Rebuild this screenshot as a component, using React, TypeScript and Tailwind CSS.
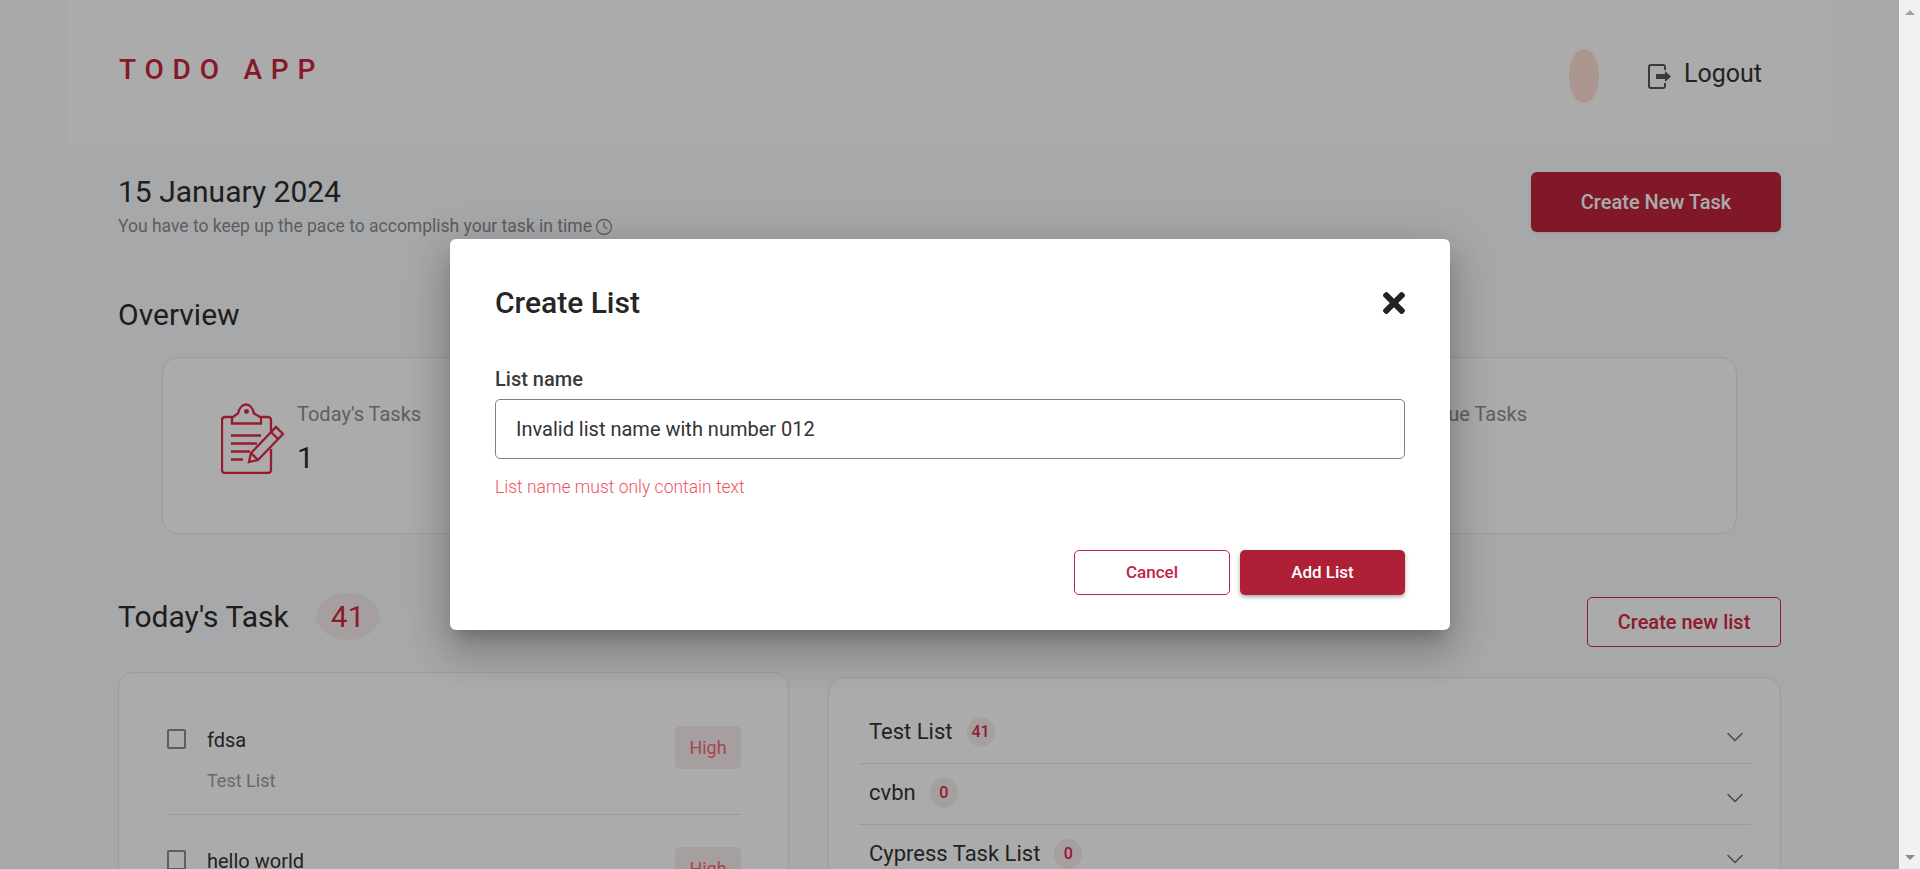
import React from "react";
import { ChevronDown, Clock } from "lucide-react";
import { FaTimes } from "react-icons/fa";

const lists = [
	{ name: "Test List", count: 41 },
	{ name: "cvbn", count: 0 },
	{ name: "Cypress Task List", count: 0 },
];

const tasks = [
	{ title: "fdsa", list: "Test List" },
	{ title: "hello world", list: "Test List" },
];

const TaskIcon: React.FC = () => (
	<svg width="64" height="71" viewBox="0 0 64 71" fill="none" stroke="#df2947" strokeWidth="2.3">
		<path d="M11 14H4a3 3 0 0 0-3 3v50a3 3 0 0 0 3 3h43a3 3 0 0 0 3-3V46" />
		<path d="M40 14h7a3 3 0 0 1 3 3v12" />
		<path d="M11 20.5h29v-6l-7-4c-1-5-4-9-8-9s-7 4-8 9l-6 4z" />
		<circle cx="25.500" cy="8.500" r="1.300" fill="#df2947" />
		<path d="M10 32.500h30M10 40.500h26M10 48.500h19M10 56.500h12" />
		<path d="M28 59l2-9 25-26 7 7-25 26z" fill="#ffffff" />
		<path d="M30 50l7 7M50 29l7 7" />
	</svg>
);

const LogoutIcon: React.FC = () => (
	<svg width="23" height="25" viewBox="0 0 23 25" fill="none">
		<path d="M17 6V3a2 2 0 0 0-2-2H3a2 2 0 0 0-2 2v19a2 2 0 0 0 2 2h12a2 2 0 0 0 2-2v-3" stroke="#575757" strokeWidth="2" />
		<path d="M8 10h9V7l6 5.500-6 5.500v-3H8z" fill="#575757" />
	</svg>
);

const Stat: React.FC<{ label: string; value: number }> = ({ label, value }) => (
	<div className="flex gap-[12px]">
		<TaskIcon />
		<div>
			<div className="text-[20px] leading-[23px] text-[#8e8e92]">{label}</div>
			<div className="text-[30px] leading-[35px] mt-[14px] text-[#2a2a2a]">{value}</div>
		</div>
	</div>
);

const TaskRow: React.FC<{ title: string; list: string }> = ({ title, list }) => (
	<div className="flex justify-between items-start border-b border-[#e7e7e7] pb-[23px] mb-[32px]">
		<div className="flex gap-[21px]">
			<div className="w-[19px] h-[20px] mt-[3px] border-2 border-[#8c8c8c] rounded-[2px]" />
			<div className="mt-[3px]">
				<div className="text-[20px] leading-[23px] text-[#333333]">{title}</div>
				<div className="text-[18px] leading-[21px] mt-[18px] text-[#9e9e9e]">{list}</div>
			</div>
		</div>
		<div className="w-[66px] h-[43px] rounded-[5px] bg-[#f7eeee] text-[#ff6576] text-[18px] flex items-center justify-center">
			High
		</div>
	</div>
);

const ListRow: React.FC<{ name: string; count: number }> = ({ name, count }) => (
	<div className="flex justify-between items-start h-[61px] border-b border-[#e7e7e7] pl-[10px] pr-[2px]">
		<div className="flex items-center gap-[14px] mt-[14px]">
			<span className="text-[22px] leading-[26px] text-[#333333]">{name}</span>
			<span className="w-[28px] h-[30px] rounded-[50%] bg-[#f7eeee] text-[#e0284a] text-[16px] font-medium flex items-center justify-center">
				{count}
			</span>
		</div>
		<ChevronDown size={28} strokeWidth={1.3} className="mt-[20px] text-[#6e6e6e]" />
	</div>
);

const App: React.FC = () => {
	return (
		<div className="h-[869px] flex overflow-hidden [font-family:Roboto,sans-serif]">
			<div className="relative flex-1 overflow-hidden bg-[#fafbfd]">
				<header className="mx-[67px] h-[143px] bg-white flex justify-between pl-[52px] pr-[70px]">
					<div className="mt-[53px] text-[28px] leading-[33px] font-medium tracking-[8.8px] text-[#c8243c]">TODO APP</div>
					<div className="flex items-center h-[152px]">
						<div className="w-[30px] h-[54px] rounded-[50%] bg-[#ffe0d7] mr-[49px]" />
						<LogoutIcon />
						<span className="ml-[13px] text-[25px] leading-[30px] -mt-[4px] text-[#333333]">Logout</span>
					</div>
				</header>

				<main className="px-[118px] pt-[29px]">
					<div className="flex justify-between items-start">
						<div>
							<h2 className="mt-[2px] text-[30px] leading-[35px] text-[#2e2e2e]">15 January 2024</h2>
							<p className="mt-[7px] text-[17.5px] leading-[21px] text-[#8b8b8e] flex items-center gap-[3px]">
								You have to keep up the pace to accomplish your task in time
								<Clock size={18} strokeWidth={1.7} />
							</p>
						</div>
						<button className="w-[250px] h-[60px] rounded-[6px] bg-[#bf253d] text-white text-[20px] font-medium shadow-sm">
							Create New Task
						</button>
					</div>

					<h2 className="mt-[60px] text-[30px] leading-[35px] text-[#2e2e2e]">Overview</h2>
					<section className="mx-[44px] mt-[25px] h-[177px] bg-white border border-[#e7e7e7] rounded-[16px] flex justify-between pl-[58px] pr-[209px] pt-[45px]">
						<Stat label="Today's Tasks" value={1} />
						<Stat label="Overdue Tasks" value={0} />
					</section>

					<section className="grid grid-cols-[671px_953px] gap-[39px] mt-[59px]">
						<div>
							<div className="flex items-center h-[47px]">
								<h2 className="text-[30px] leading-[35px] text-[#2e2e2e]">Today's Task</h2>
								<span className="ml-[27px] w-[64px] h-[47px] rounded-[50%] bg-[#f7eeee] text-[#d42742] text-[30px] flex items-center justify-center">
									41
								</span>
							</div>
							<div className="mt-[32px] bg-white border border-[#e7e7e7] rounded-[16px] pl-[48px] pr-[47px] pt-[53px] h-[400px]">
								{tasks.map((task) => (
									<TaskRow key={task.title} title={task.title} list={task.list} />
								))}
							</div>
						</div>
						<div>
							<div className="flex justify-end mt-[4px]">
								<button className="w-[194px] h-[50px] rounded-[5px] border border-[#d42742] bg-white text-[#d42742] text-[20px] font-medium">
									Create new list
								</button>
							</div>
							<div className="mt-[30px] bg-white border border-[#e7e7e7] rounded-[16px] pl-[30px] pr-[29px] pt-[25px] h-[400px]">
								{lists.map((list) => (
									<ListRow key={list.name} name={list.name} count={list.count} />
								))}
							</div>
						</div>
					</section>
				</main>

				<div className="absolute inset-0 bg-[rgba(0,0,0,0.33)]" />

				<div className="absolute left-[450px] top-[239px] w-[1000px] h-[391px] bg-white rounded-[6px] px-[45px] pt-[47px] shadow-[0_11px_15px_-7px_rgba(0,0,0,0.2),0_24px_38px_3px_rgba(0,0,0,0.14),0_9px_46px_8px_rgba(0,0,0,0.12)]">
					<div className="flex justify-between items-center h-[33px]">
						<h3 className="text-[30px] leading-[33px] font-medium text-[#262626]">Create List</h3>
						<FaTimes size={32} className="-mr-[5px] text-[#222222]" />
					</div>
					<label className="block mt-[49px] text-[20px] leading-[23px] font-medium text-[#3a3a3a]">List name</label>
					<input
						readOnly
						value="Invalid list name with number 012"
						className="block w-full h-[60px] mt-[8px] px-[20px] border border-[#808080] rounded-[5px] text-[20px] text-[#333333] outline-none"
					/>
					<p className="mt-[18px] text-[17.5px] leading-[21px] font-light text-[#f2545f]">List name must only contain text</p>
					<div className="flex justify-end gap-[10px] mt-[52px]">
						<button className="w-[156px] h-[45px] rounded-[5px] border border-[#c4233f] text-[#c4233f] text-[17px] font-medium">
							Cancel
						</button>
						<button className="w-[165px] h-[45px] rounded-[5px] bg-[#ae2035] text-white text-[17px] font-medium shadow-[0_2px_4px_rgba(0,0,0,0.35)]">
							Add List
						</button>
					</div>
				</div>
			</div>

			<div className="w-[21px] bg-[#f1f1f1] flex flex-col justify-between items-center py-[10px]">
				<svg width="10" height="5" viewBox="0 0 10 5"><path d="M5 0l5 5H0z" fill="#a3a3a3" /></svg>
				<svg width="10" height="5" viewBox="0 0 10 5" className="mb-[-1px]"><path d="M0 0h10L5 5z" fill="#8a8a8a" /></svg>
			</div>
		</div>
	);
};

export default App;
